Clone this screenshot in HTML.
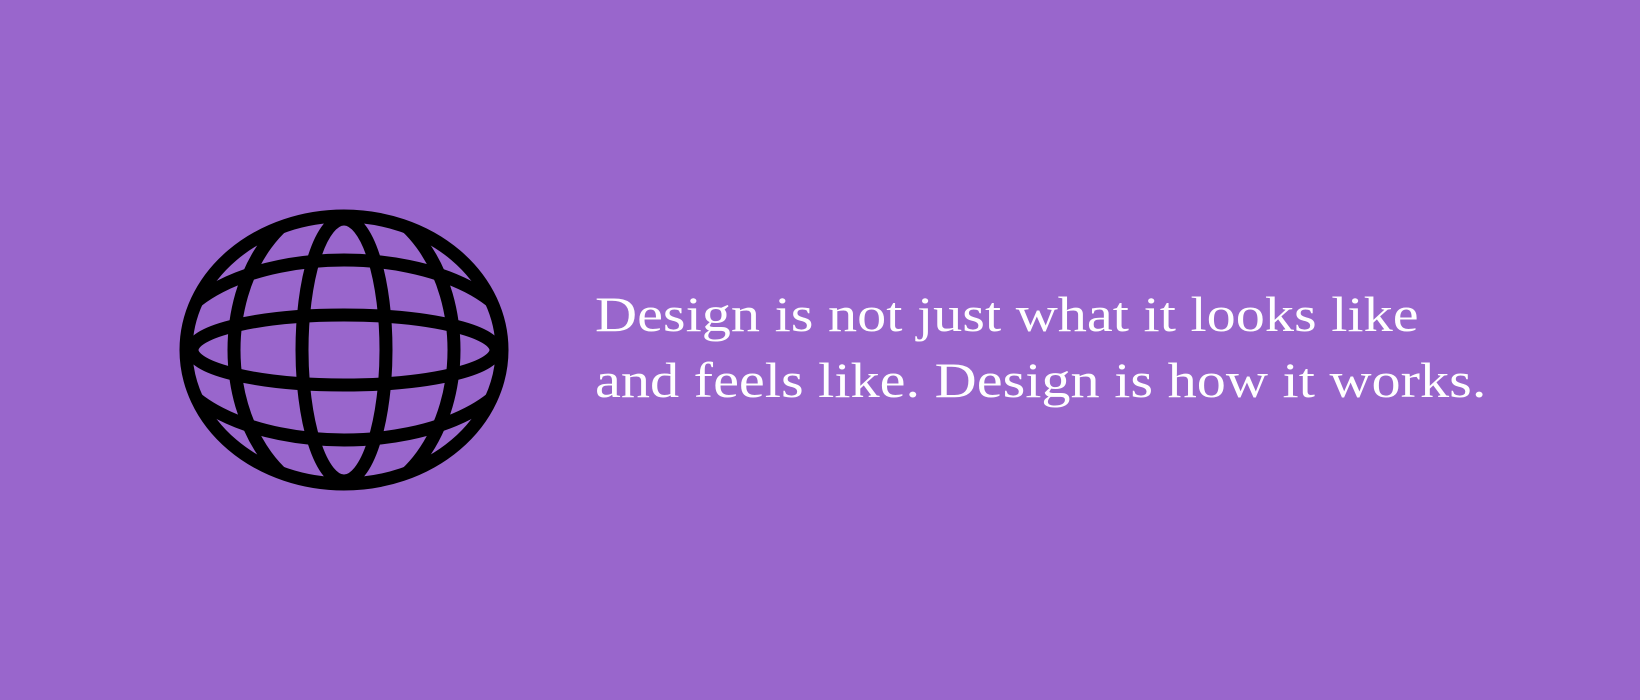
<!DOCTYPE html>
<html><head><style>
html,body{margin:0;padding:0;}
body{width:1640px;height:700px;background:#9966CC;position:relative;overflow:hidden;}
.t{position:absolute;left:595px;top:281px;color:#fff;font-family:"Liberation Serif",serif;font-size:50px;line-height:66px;white-space:nowrap;transform:scaleX(1.165);transform-origin:0 0;}
svg{position:absolute;left:0;top:0;}
</style></head><body>
<svg width="1640" height="700" viewBox="0 0 1640 700">
<defs><clipPath id="c"><ellipse cx="344" cy="350" rx="158" ry="135"/></clipPath></defs>
<g fill="none" stroke="#000" stroke-width="13">
<ellipse cx="344" cy="350" rx="158" ry="134"/>
<g clip-path="url(#c)">
<ellipse cx="344" cy="350" rx="42" ry="131"/>
<ellipse cx="344" cy="350" rx="110" ry="150"/>
<ellipse cx="344" cy="350" rx="152" ry="35"/>
<ellipse cx="344" cy="350" rx="175" ry="90"/>
</g></g>
</svg>
<div class="t">Design is not just what it looks like<br>and feels like. Design is how it works.</div>
</body></html>
